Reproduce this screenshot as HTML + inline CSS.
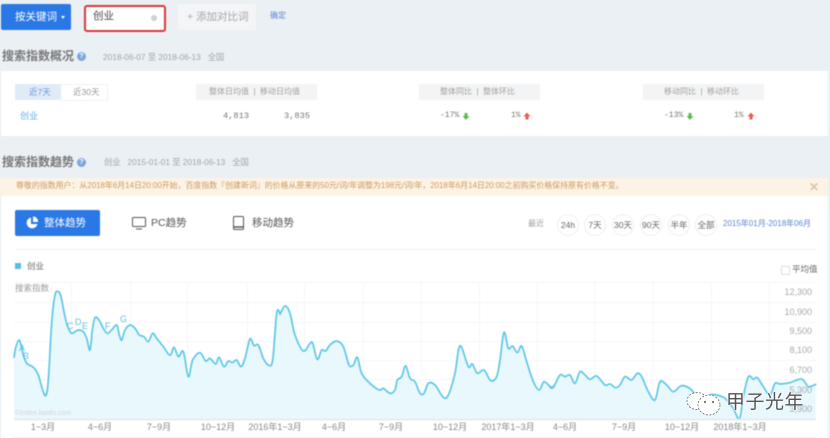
<!DOCTYPE html>
<html lang="zh"><head><meta charset="utf-8">
<style>
html,body{margin:0;padding:0;width:830px;height:438px;overflow:hidden;background:#ebf0f4}
body{position:relative;font-family:"Liberation Sans","Noto Sans CJK SC",sans-serif;color:#666}
#w{position:absolute;left:0;top:0;width:830px;height:438px;filter:blur(.4px);overflow:hidden}
.a{position:absolute;white-space:nowrap;line-height:1}
.b{position:absolute}
.m{font-family:"Liberation Mono","Noto Sans CJK SC",monospace}
.c{position:absolute;top:214px;width:20px;height:20px;border:1px solid #eceef0;border-radius:50%;font-size:8.5px;line-height:20px;text-align:center;color:#666;background:#fff;white-space:nowrap}
.x{position:absolute;top:423px;font-size:9px;line-height:1;color:#888;white-space:nowrap;transform:translateX(-50%)}
.y{position:absolute;right:18px;font-size:9px;line-height:1;color:#a5a9ad;white-space:nowrap}
.h{position:absolute;width:9px;height:9px;border-radius:50%;background:#7da5dc;color:#fff;font-size:7px;line-height:9px;text-align:center;font-weight:bold}
</style></head><body><div id="w">
<div class="b" style="left:1px;top:4px;width:70px;height:26px;background:#2a78e6;border-radius:2px"></div>
<div class="a" style="left:15px;top:12px;font-size:10.5px;color:#fff">按关键词</div>
<div class="b" style="left:61px;top:16px;border:2px solid transparent;border-top:3px solid #fff"></div>
<div class="b" style="left:84px;top:5px;width:78px;height:23px;background:#fff;border:2px solid #d5393f;border-radius:3px"></div>
<div class="a" style="left:93px;top:11px;font-size:10.5px;color:#444">创业</div>
<div class="b" style="left:151px;top:15px;width:6px;height:6px;border-radius:50%;background:#cdd0d4"></div>
<div class="b" style="left:178px;top:4px;width:78px;height:26px;background:#f3f5f7"></div>
<div class="a" style="left:187px;top:12px;font-size:10.5px;color:#a3a7ab">+ 添加对比词</div>
<div class="a" style="left:270px;top:12px;font-size:8px;color:#5d88d8">确定</div>

<div class="a" style="left:2px;top:50px;font-size:12px;font-weight:bold;color:#777">搜索指数概况</div>
<div class="h" style="left:77px;top:52px">?</div>
<div class="a" style="left:103px;top:53px;font-size:8.3px;color:#a2a6aa">2018-06-07 至 2018-06-13 &nbsp;&nbsp;全国</div>

<div class="b" style="left:1px;top:71px;width:827px;height:65px;background:#fff"></div>
<div class="b" style="left:15px;top:84px;width:46px;height:16px;background:#e0ebfa"></div>
<div class="b" style="left:61px;top:84px;width:46px;height:15px;border:1px solid #f0f2f5;border-left:0"></div>
<div class="a" style="left:29px;top:88px;font-size:8.5px;color:#6b96d6">近7天</div>
<div class="a" style="left:73px;top:88px;font-size:8.5px;color:#999">近30天</div>
<div class="a" style="left:20px;top:112px;font-size:9px;color:#62b0e0">创业</div>

<div class="b" style="left:196px;top:84px;width:121px;height:16px;background:#f3f4f5"></div>
<div class="a" style="left:209px;top:88px;font-size:8px;color:#a0a0a0">整体日均值 &nbsp;|&nbsp; 移动日均值</div>
<div class="a m" style="left:223px;top:112px;font-size:8.7px;color:#777">4,813</div>
<div class="a m" style="left:284px;top:112px;font-size:8.7px;color:#777">3,835</div>

<div class="b" style="left:419px;top:84px;width:121px;height:16px;background:#f3f4f5"></div>
<div class="a" style="left:440px;top:88px;font-size:8px;color:#a0a0a0">整体同比 &nbsp;|&nbsp; 整体环比</div>
<div class="a m" style="left:440px;top:112px;font-size:8px;color:#777">-17%</div>
<div class="a m" style="left:511px;top:112px;font-size:8px;color:#777">1%</div>

<div class="b" style="left:643px;top:84px;width:121px;height:16px;background:#f3f4f5"></div>
<div class="a" style="left:664px;top:88px;font-size:8px;color:#a0a0a0">移动同比 &nbsp;|&nbsp; 移动环比</div>
<div class="a m" style="left:664px;top:112px;font-size:8px;color:#777">-13%</div>
<div class="a m" style="left:734px;top:112px;font-size:8px;color:#777">1%</div>
<svg class="b" style="left:0;top:0" width="830" height="140">
<g fill="#5cb85c" transform="translate(-1.5,0)"><path d="M466 113h3v3h2l-3.500 4-3.500-4h2z"/><path d="M690 113h3v3h2l-3.500 4-3.500-4h2z"/></g>
<g fill="#e8604c" transform="translate(1.500,-.5)"><path d="M527 120h-3v-3h-2l3.500-4 3.500 4h-2zM751 120h-3v-3h-2l3.500-4 3.500 4h-2z"/></g>
</svg>

<div class="a" style="left:2px;top:156px;font-size:12px;font-weight:bold;color:#777">搜索指数趋势</div>
<div class="h" style="left:77px;top:158px">?</div>
<div class="a" style="left:104px;top:158px;font-size:8.3px;color:#a2a6aa">创业 &nbsp;&nbsp;2015-01-01 至 2018-06-13 &nbsp;&nbsp;全国</div>

<div class="b" style="left:0;top:178px;width:828px;height:18px;background:#fdf3e4"></div>
<div class="a" style="left:16px;top:182px;font-size:7.93px;color:#c79a66">尊敬的指数用户：从2018年6月14日20:00开始，百度指数『创建新词』的价格从原来的50元/词/年调整为198元/词/年，2018年6月14日20:00之前购买价格保持原有价格不变。</div>
<div class="a" style="left:809px;top:181px;font-size:12px;font-weight:bold;color:#d9c6a8">✕</div>

<div class="b" style="left:1px;top:196px;width:827px;height:242px;background:#fff"></div>
<div class="b" style="left:15px;top:210px;width:85px;height:26px;background:#2a78e6;border-radius:2px"></div>
<svg class="b" style="left:25px;top:216px" width="14" height="14"><path d="M6 1.500A5.500 5.500 0 1 0 12.500 8H6z" fill="#fff"/><path d="M8 .5A5 5 0 0 1 13 6H8z" fill="#fff"/></svg>
<div class="a" style="left:44px;top:218px;font-size:10.5px;color:#fff">整体趋势</div>
<svg class="b" style="left:132px;top:216px" width="16" height="15" fill="none" stroke="#555"><rect x=".5" y="1.500" width="13" height="9" rx="1"/><path d="M4 13h6"/></svg>
<div class="a" style="left:151px;top:218px;font-size:10.5px;color:#555">PC趋势</div>
<svg class="b" style="left:233px;top:216px" width="12" height="15" fill="none" stroke="#555"><rect x=".5" y=".5" width="10" height="13" rx="1"/><path d="M.5 11h10" stroke-width="1.500"/></svg>
<div class="a" style="left:252px;top:218px;font-size:10.5px;color:#555">移动趋势</div>

<div class="a" style="left:528px;top:220px;font-size:8px;color:#9a9ea2">最近</div>
<div class="c" style="left:557px">24h</div><div class="c" style="left:584px">7天</div><div class="c" style="left:612px">30天</div><div class="c" style="left:640px">90天</div><div class="c" style="left:668px">半年</div><div class="c" style="left:695px">全部</div>
<div class="a" style="left:723px;top:220px;font-size:8px;color:#5d88d0">2015年01月-2018年06月</div>
<div class="b" style="left:15px;top:249px;width:801px;height:1px;background:#eef0f3"></div>

<div class="b" style="left:15px;top:263px;width:6px;height:6px;background:#55c0e4"></div>
<div class="a" style="left:27px;top:262px;font-size:8.500px;color:#666">创业</div>
<div class="b" style="left:781px;top:266px;width:7px;height:7px;border:1px solid #ddd"></div>
<div class="a" style="left:792px;top:265px;font-size:8.500px;color:#666">平均值</div>

<svg class="b" id="chart" style="left:0;top:0" width="830" height="438">
<g stroke="#f4f6f8" stroke-width="1" fill="none">
<path d="M14 282.500H816M14 302.500H816M14 322.500H816M14 341.500H816M14 360.500H816M14 379.500H816M14 399.500H816"/>
<path d="M71.500 282V419M130.500 282V419M187.500 282V419M247.500 282V419M304.500 282V419M363.500 282V419M421.500 282V419M479.500 282V419M537.500 282V419M594.500 282V419M653.500 282V419M711.500 282V419M769.500 282V419"/>
</g>
<g transform="translate(0,280) scale(.33333)">
<polygon fill="#e9f8fd" points="42,417 42,232 48,200 57,180 63,195 70,225 80,250 100,262 115,285 125,320 137,347 145,300 155,130 165,45 175,35 183,50 195,110 205,145 215,160 225,155 235,150 250,155 260,175 270,210 277,150 285,113 297,120 310,145 322,160 335,150 350,135 358,165 365,180 375,150 390,135 405,145 418,165 432,170 445,185 458,160 470,175 490,200 510,226 522,202 535,230 550,215 565,290 578,240 600,218 617,243 630,235 647,252 657,232 672,260 685,243 697,248 710,240 723,260 735,235 750,177 762,197 775,195 790,235 805,255 818,240 830,100 840,100 840,417"/>
<polyline fill="none" stroke="#5ac6e6" stroke-width="5" stroke-linejoin="round" stroke-linecap="round" points="42,232 48,200 57,180 63,195 70,225 80,250 100,262 115,285 125,320 137,347 145,300 155,130 165,45 175,35 183,50 195,110 205,145 215,160 225,155 235,150 250,155 260,175 270,210 277,150 285,113 297,120 310,145 322,160 335,150 350,135 358,165 365,180 375,150 390,135 405,145 418,165 432,170 445,185 458,160 470,175 490,200 510,226 522,202 535,230 550,215 565,290 578,240 600,218 617,243 630,235 647,252 657,232 672,260 685,243 697,248 710,240 723,260 735,235 750,177 762,197 775,195 790,235 805,255 818,240 830,100 840,100"/>
</g>
<g transform="translate(280,280) scale(.33333)">
<polygon fill="#e9f8fd" points="0,417 0,103 15,78 30,100 45,165 70,213 90,190 98,190 112,238 125,210 137,213 150,195 170,183 190,200 207,255 220,255 232,232 245,280 270,310 298,330 310,325 330,340 345,330 352,300 365,290 377,257 390,295 405,305 420,340 432,340 445,310 465,315 490,352 505,345 525,280 540,197 565,260 577,252 592,280 612,270 632,302 650,290 660,240 672,157 685,205 698,198 712,218 725,198 740,245 760,305 778,330 792,305 815,322 830,305 840,290 840,417"/>
<polyline fill="none" stroke="#5ac6e6" stroke-width="5" stroke-linejoin="round" stroke-linecap="round" points="0,103 15,78 30,100 45,165 70,213 90,190 98,190 112,238 125,210 137,213 150,195 170,183 190,200 207,255 220,255 232,232 245,280 270,310 298,330 310,325 330,340 345,330 352,300 365,290 377,257 390,295 405,305 420,340 432,340 445,310 465,315 490,352 505,345 525,280 540,197 565,260 577,252 592,280 612,270 632,302 650,290 660,240 672,157 685,205 698,198 712,218 725,198 740,245 760,305 778,330 792,305 815,322 830,305 840,290"/>
</g>
<g transform="translate(550,280) scale(.33333)">
<polygon fill="#e9f8fd" points="0,417 0,322 10,322 30,285 45,290 60,285 75,310 90,275 105,285 120,298 140,288 165,315 180,312 197,323 210,315 225,290 245,300 262,280 275,290 295,335 315,360 330,305 350,315 370,335 395,317 425,330 450,365 480,345 500,345 525,355 550,385 568,417 580,350 595,290 610,298 622,293 640,320 660,345 675,310 690,312 720,308 755,297 775,320 797,313 797,417"/>
<polyline fill="none" stroke="#5ac6e6" stroke-width="5" stroke-linejoin="round" stroke-linecap="round" points="0,322 10,322 30,285 45,290 60,285 75,310 90,275 105,285 120,298 140,288 165,315 180,312 197,323 210,315 225,290 245,300 262,280 275,290 295,335 315,360 330,305 350,315 370,335 395,317 425,330 450,365 480,345 500,345 525,355 550,385 568,417 580,350 595,290 610,298 622,293 640,320 660,345 675,310 690,312 720,308 755,297 775,320 797,313"/>
</g>
<path d="M14 419.500H816" stroke="#e3e8ec" stroke-width="1.500"/>
<path d="M14 437.500H816" stroke="#eceff2" stroke-width="1"/>
<g font-family="Liberation Sans" font-size="9" fill="#62bfe0">
<text x="19" y="351">A</text><text x="23" y="359">B</text><text x="67" y="329">C</text><text x="75" y="325">D</text><text x="82" y="329">E</text><text x="105" y="329">F</text><text x="120" y="322">G</text>
</g>
</svg>
<div class="a" style="left:15px;top:284px;font-size:8.500px;color:#999">搜索指数</div>
<div class="a" style="left:15px;top:410px;font-size:7px;color:#d2d6da">©index.baidu.com</div>

<div class="y" style="top:288px">12,300</div><div class="y" style="top:308px">10,900</div><div class="y" style="top:327px">9,500</div><div class="y" style="top:346px">8,100</div><div class="y" style="top:366px">6,700</div><div class="y" style="top:386px">5,300</div><div class="y" style="top:405px">3,900</div>

<div class="x" style="left:43px">1~3月</div><div class="x" style="left:100px">4~6月</div><div class="x" style="left:159px">7~9月</div><div class="x" style="left:218px">10~12月</div><div class="x" style="left:275px">2016年1~3月</div><div class="x" style="left:334px">4~6月</div><div class="x" style="left:391px">7~9月</div><div class="x" style="left:450px">10~12月</div><div class="x" style="left:508px">2017年1~3月</div><div class="x" style="left:565px">4~6月</div><div class="x" style="left:624px">7~9月</div><div class="x" style="left:682px">10~12月</div><div class="x" style="left:740px">2018年1~3月</div>
</div>

<svg class="b" style="left:680px;top:388px" width="50" height="32" fill="#fff" stroke="#555" stroke-width=".7" stroke-dasharray="2 1.500">
<ellipse cx="17" cy="13" rx="10" ry="8.500"/><ellipse cx="29" cy="17" rx="11" ry="10"/><circle cx="25" cy="14" r="1" fill="#555" stroke="none"/><circle cx="33" cy="14" r="1" fill="#555" stroke="none"/>
</svg>
<div class="a" style="left:726px;top:393px;font-size:19px;color:#555;letter-spacing:.5px;text-shadow:0 0 1px #fff,1px 0 1px #fff,-1px 0 1px #fff">甲子光年</div>
<script>
(function(){
var NS="http://www.w3.org/2000/svg";
function parse(s){return s.trim().split(/\s+/).map(function(p){return p.split(",").map(Number)})}
function curve(p){var d="";for(var i=0;i<p.length-1;i++){var a=p[i-1]||p[i],b=p[i],c=p[i+1],e=p[i+2]||c;
d+="C"+(b[0]+(c[0]-a[0])/6)+" "+(b[1]+(c[1]-a[1])/6)+" "+(c[0]-(e[0]-b[0])/6)+" "+(c[1]-(e[1]-b[1])/6)+" "+c[0]+" "+c[1]}return d}
var els=document.querySelectorAll("#chart polygon,#chart polyline");
for(var i=0;i<els.length;i++){var el=els[i],pts=parse(el.getAttribute("points")),d,n=document.createElementNS(NS,"path");
if(el.tagName==="polygon"){var inner=pts.slice(1,-1);d="M"+pts[0].join(" ")+"L"+inner[0].join(" ")+curve(inner)+"L"+pts[pts.length-1].join(" ")+"Z"}
else{d="M"+pts[0].join(" ")+curve(pts)}
n.setAttribute("d",d);["fill","stroke","stroke-width","stroke-linejoin","stroke-linecap"].forEach(function(k){var v=el.getAttribute(k);if(v)n.setAttribute(k,v)});
el.parentNode.replaceChild(n,el)}
})();
</script>
</body></html>
